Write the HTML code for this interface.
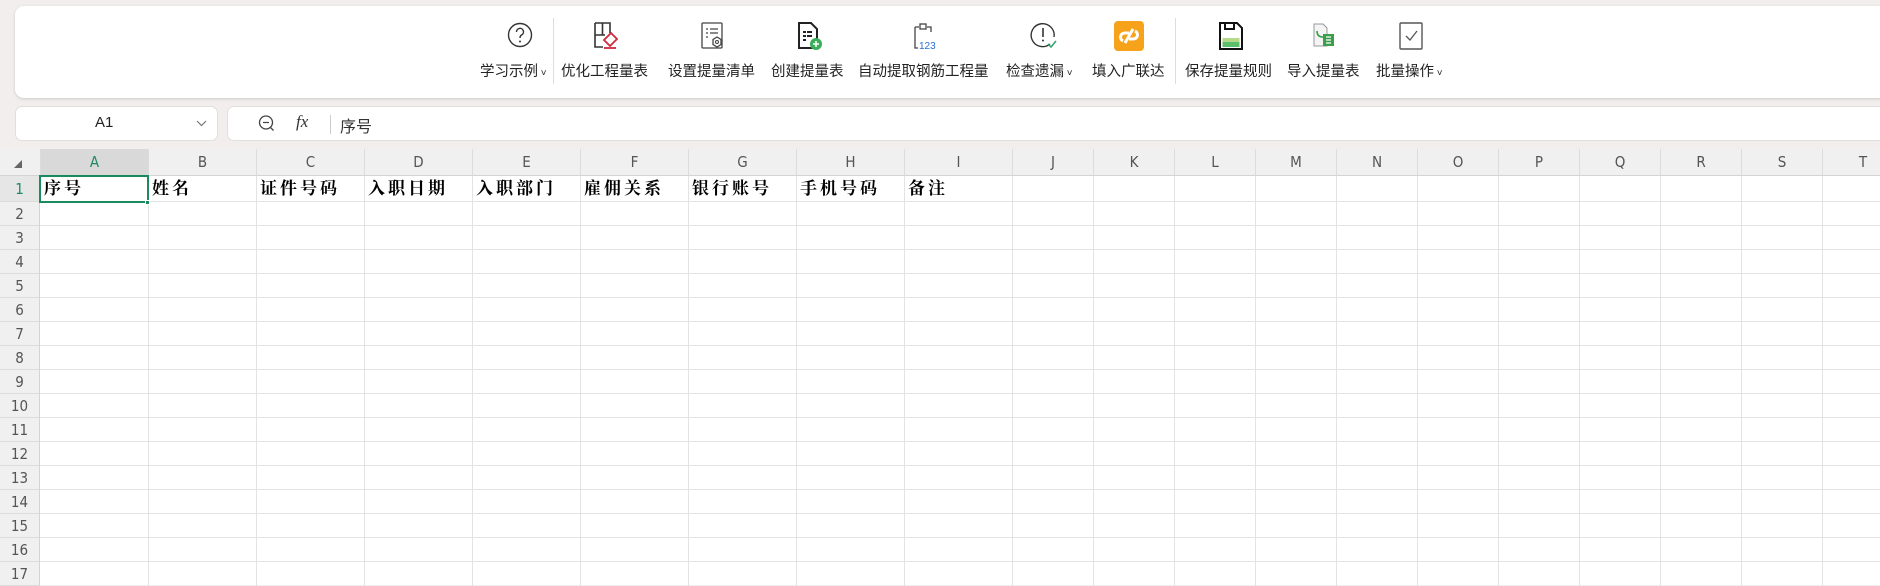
<!DOCTYPE html>
<html><head><meta charset="utf-8"><style>
*{margin:0;padding:0;box-sizing:border-box}
body{width:1880px;height:585px;overflow:hidden;background:#f2eeed;font-family:"Liberation Sans","Noto Sans CJK SC",sans-serif;position:relative}
.panel{position:absolute;left:15px;top:6px;width:1880px;height:92px;background:#fff;border-radius:9px;box-shadow:0 1px 3px rgba(0,0,0,.15)}
.btn{position:absolute;top:0;height:92px;text-align:center;font-size:14.5px;color:#222;white-space:nowrap}
.btn svg{position:absolute;top:15px}
.btn span{position:absolute;top:54px;left:0}
.sep{position:absolute;top:12px;width:1px;height:66px;background:#ddd}
.namebox{position:absolute;left:16px;top:107px;width:201px;height:33px;background:#fff;border-radius:6px;box-shadow:0 0 0 1px #e2dede}
.fbar{position:absolute;left:228px;top:107px;width:1700px;height:33px;background:#fff;border-radius:6px;box-shadow:0 0 0 1px #e2dede}
.grid{position:absolute;left:0;top:149px;width:1880px;height:436px;background:#fff}
.ch{position:absolute;top:0;height:27px;background:#f0f0f0;border-right:1px solid #dcdcdc;border-bottom:1px solid #d4d4d4;text-align:center;line-height:27px;font-size:15px;color:#555;font-family:"DejaVu Sans Condensed","Liberation Sans",sans-serif}
.rh{position:absolute;left:0;width:40px;background:#f0f0f0;border-bottom:1px solid #dcdcdc;border-right:1px solid #d4d4d4;text-align:center;font-size:15px;color:#555;font-family:"DejaVu Sans Condensed","Liberation Sans",sans-serif}
.vl{position:absolute;top:27px;width:1px;height:410px;background:#e3e3e3}
.hl{position:absolute;left:40px;width:1840px;height:1px;background:#e3e3e3}
.c{position:absolute;top:27px;height:26px;line-height:26px;font-family:"Liberation Serif","Noto Serif CJK SC",serif;font-weight:700;font-size:17px;letter-spacing:3px;color:#000}
</style></head><body>
<div class="panel">
 <div class="btn" style="left:456px;width:90px"><svg style="left:36px" width="26" height="28" viewBox="0 0 26 28"><circle cx="13" cy="14" r="11.5" fill="none" stroke="#333" stroke-width="1.4"/><path d="M9.5 11a3.5 3.5 0 1 1 5 3c-1.2.7-1.5 1.5-1.5 3" fill="none" stroke="#333" stroke-width="1.4"/><circle cx="13" cy="20.5" r="1" fill="#333"/></svg><span style="left:9px">学习示例<small style="font-size:10px"> ˅</small></span></div>
 <div class="sep" style="left:538px"></div>
 <div class="btn" style="left:546px;width:92px"><svg style="left:32px" width="28" height="30" viewBox="0 0 28 30"><path d="M2 2h15v10M2 2v24h8M2 14h10M9.5 2v12" fill="none" stroke="#333" stroke-width="1.6"/><path d="M18 12l6 6-7 7-6-6z" fill="none" stroke="#d0283c" stroke-width="1.8"/><path d="M11 27h12" stroke="#d0283c" stroke-width="1.8"/></svg><span style="left:0">优化工程量表</span></div>
 <div class="btn" style="left:652px;width:92px"><svg style="left:33px" width="26" height="30" viewBox="0 0 26 30"><rect x="2" y="2" width="20" height="25" rx="1" fill="none" stroke="#444" stroke-width="1.3"/><path d="M6 8h2M10 8h8M6 12h2M10 12h8M6 16h2" stroke="#444" stroke-width="1.3"/><path d="M17 16l4 2.5v5l-4 2.5-4-2.5v-5z" fill="#fff" stroke="#444" stroke-width="1.3"/><circle cx="17" cy="21" r="1.5" fill="none" stroke="#444"/></svg><span style="left:1px">设置提量清单</span></div>
 <div class="btn" style="left:756px;width:78px"><svg style="left:26px" width="26" height="30" viewBox="0 0 26 30"><path d="M2 2h12l6 6v19H2z" fill="#fff" stroke="#222" stroke-width="2"/><path d="M6 11h3M10 11h5M6 15h3M10 15h5M6 19h3" stroke="#222" stroke-width="2"/><circle cx="19" cy="23" r="6" fill="#3cae5a"/><path d="M19 20v6M16 23h6" stroke="#fff" stroke-width="1.5"/></svg><span style="left:0">创建提量表</span></div>
 <div class="btn" style="left:843px;width:136px"><svg style="left:54px" width="26" height="30" viewBox="0 0 26 30"><path d="M3 6h4M15 6h4v5M3 6v21h3" fill="none" stroke="#444" stroke-width="1.3"/><rect x="8" y="3" width="6" height="5" fill="none" stroke="#444" stroke-width="1.3"/><text x="7" y="28" font-size="10" fill="#2a6fd6" font-family="Liberation Sans">123</text></svg><span style="left:0">自动提取钢筋工程量</span></div>
 <div class="btn" style="left:991px;width:78px"><svg style="left:24px" width="28" height="30" viewBox="0 0 28 30"><path d="M20 23A11.5 11.5 0 1 1 24 16" fill="none" stroke="#333" stroke-width="1.4"/><path d="M13 7v9" stroke="#333" stroke-width="1.6"/><circle cx="13" cy="19.5" r="1" fill="#333"/><path d="M18 23l3 3 5-6" fill="none" stroke="#2fa36b" stroke-width="1.5"/></svg><span style="left:0">检查遗漏<small style="font-size:10px"> ˅</small></span></div>
 <div class="btn" style="left:1077px;width:78px"><svg style="left:22px" width="30" height="30" viewBox="0 0 30 30"><rect width="30" height="30" rx="4" fill="#f7a21b"/><path d="M9 20c-4-2-3-8 2-8l4 0M21 10c4 2 3 8-2 8l-4 0M11 22l8-14" fill="none" stroke="#fff" stroke-width="3"/></svg><span style="left:0">填入广联达</span></div>
 <div class="sep" style="left:1160px"></div>
 <div class="btn" style="left:1170px;width:92px"><svg style="left:33px" width="26" height="30" viewBox="0 0 26 30"><path d="M2 2h17l5 5v21H2z" fill="#fff" stroke="#111" stroke-width="2"/><path d="M7 2v6h9V2" fill="none" stroke="#111" stroke-width="2"/><rect x="4.5" y="17" width="17" height="9" fill="#5cbf6b"/><rect x="4.5" y="17" width="17" height="4" fill="#b6d98a"/></svg><span style="left:0">保存提量规则</span></div>
 <div class="btn" style="left:1272px;width:78px"><svg style="left:24px" width="26" height="30" viewBox="0 0 26 30"><path d="M3 3h9l4 4v18H3z" fill="#f4f4f4" stroke="#999" stroke-width="1"/><path d="M6 10c0 4 2 6 6 6" fill="none" stroke="#3a9e4a" stroke-width="1.6"/><rect x="12" y="13" width="11" height="12" fill="#3a9e4a"/><path d="M15 16h5M15 19h5M15 22h5" stroke="#fff" stroke-width="1.2"/></svg><span style="left:0">导入提量表</span></div>
 <div class="btn" style="left:1360px;width:78px"><svg style="left:23px" width="26" height="30" viewBox="0 0 26 30"><rect x="2" y="2" width="22" height="26" rx="1" fill="none" stroke="#555" stroke-width="1.4"/><path d="M8 15l4 4 7-9" fill="none" stroke="#555" stroke-width="1.3"/></svg><span style="left:1px">批量操作<small style="font-size:10px"> ˅</small></span></div>
</div>
<div class="namebox"><span style="position:absolute;left:79px;top:7px;font-size:15px;color:#222">A1</span><svg style="position:absolute;left:180px;top:13px" width="11" height="7" viewBox="0 0 11 7"><path d="M1 1l4.5 4.5L10 1" fill="none" stroke="#777" stroke-width="1.2"/></svg></div>
<div class="fbar"><svg style="position:absolute;left:30px;top:7px" width="18" height="20" viewBox="0 0 18 20"><circle cx="8" cy="8.5" r="6.5" fill="none" stroke="#444" stroke-width="1.3"/><path d="M5 8.5h6M12.5 13.5l3 3" stroke="#444" stroke-width="1.3"/></svg><span style="position:absolute;left:68px;top:5px;font-family:'Liberation Serif',serif;font-style:italic;font-size:17px;color:#333">fx</span><div style="position:absolute;left:102px;top:8px;width:1px;height:19px;background:#ccc"></div><span style="position:absolute;left:112px;top:6px;font-size:16px;color:#333">序号</span></div>
<div class="grid">
 <div class="ch" style="left:0;width:41px;background:#f0f0f0"><svg style="position:absolute;left:14px;top:11px" width="9" height="9"><path d="M8 0v8H0z" fill="#666"/></svg></div>
 <div class="ch" style="left:41px;width:108px;background:#d9d9d9;color:#1b8a5e">A</div>
 <div class="ch" style="left:149px;width:108px">B</div><div class="ch" style="left:257px;width:108px">C</div><div class="ch" style="left:365px;width:108px">D</div><div class="ch" style="left:473px;width:108px">E</div><div class="ch" style="left:581px;width:108px">F</div><div class="ch" style="left:689px;width:108px">G</div><div class="ch" style="left:797px;width:108px">H</div><div class="ch" style="left:905px;width:108px">I</div>
 <div class="ch" style="left:1013px;width:81px">J</div><div class="ch" style="left:1094px;width:81px">K</div><div class="ch" style="left:1175px;width:81px">L</div><div class="ch" style="left:1256px;width:81px">M</div><div class="ch" style="left:1337px;width:81px">N</div><div class="ch" style="left:1418px;width:81px">O</div><div class="ch" style="left:1499px;width:81px">P</div><div class="ch" style="left:1580px;width:81px">Q</div><div class="ch" style="left:1661px;width:81px">R</div><div class="ch" style="left:1742px;width:81px">S</div><div class="ch" style="left:1823px;width:81px">T</div>
 <div class="rh" style="top:27px;height:26px;line-height:26px;background:#e6e6e6;color:#1b8a5e">1</div>
 <div class="rh" style="top:53px;height:24px;line-height:24px">2</div><div class="rh" style="top:77px;height:24px;line-height:24px">3</div><div class="rh" style="top:101px;height:24px;line-height:24px">4</div><div class="rh" style="top:125px;height:24px;line-height:24px">5</div><div class="rh" style="top:149px;height:24px;line-height:24px">6</div><div class="rh" style="top:173px;height:24px;line-height:24px">7</div><div class="rh" style="top:197px;height:24px;line-height:24px">8</div><div class="rh" style="top:221px;height:24px;line-height:24px">9</div><div class="rh" style="top:245px;height:24px;line-height:24px">10</div><div class="rh" style="top:269px;height:24px;line-height:24px">11</div><div class="rh" style="top:293px;height:24px;line-height:24px">12</div><div class="rh" style="top:317px;height:24px;line-height:24px">13</div><div class="rh" style="top:341px;height:24px;line-height:24px">14</div><div class="rh" style="top:365px;height:24px;line-height:24px">15</div><div class="rh" style="top:389px;height:24px;line-height:24px">16</div><div class="rh" style="top:413px;height:24px;line-height:24px">17</div>
 <div class="vl" style="left:148px"></div><div class="vl" style="left:256px"></div><div class="vl" style="left:364px"></div><div class="vl" style="left:472px"></div><div class="vl" style="left:580px"></div><div class="vl" style="left:688px"></div><div class="vl" style="left:796px"></div><div class="vl" style="left:904px"></div><div class="vl" style="left:1012px"></div><div class="vl" style="left:1093px"></div><div class="vl" style="left:1174px"></div><div class="vl" style="left:1255px"></div><div class="vl" style="left:1336px"></div><div class="vl" style="left:1417px"></div><div class="vl" style="left:1498px"></div><div class="vl" style="left:1579px"></div><div class="vl" style="left:1660px"></div><div class="vl" style="left:1741px"></div><div class="vl" style="left:1822px"></div>
 <div class="hl" style="top:52px"></div><div class="hl" style="top:76px"></div><div class="hl" style="top:100px"></div><div class="hl" style="top:124px"></div><div class="hl" style="top:148px"></div><div class="hl" style="top:172px"></div><div class="hl" style="top:196px"></div><div class="hl" style="top:220px"></div><div class="hl" style="top:244px"></div><div class="hl" style="top:268px"></div><div class="hl" style="top:292px"></div><div class="hl" style="top:316px"></div><div class="hl" style="top:340px"></div><div class="hl" style="top:364px"></div><div class="hl" style="top:388px"></div><div class="hl" style="top:412px"></div>
 <div class="c" style="left:44px">序号</div><div class="c" style="left:152px">姓名</div><div class="c" style="left:260px">证件号码</div><div class="c" style="left:368px">入职日期</div><div class="c" style="left:476px">入职部门</div><div class="c" style="left:584px">雇佣关系</div><div class="c" style="left:692px">银行账号</div><div class="c" style="left:800px">手机号码</div><div class="c" style="left:908px">备注</div>
 <div style="position:absolute;left:39px;top:26px;width:110px;height:28px;border:2px solid #1b8a5e"></div>
 <div style="position:absolute;left:145px;top:51px;width:5px;height:5px;background:#1b8a5e;border:1px solid #fff"></div>
</div>
</body></html>
